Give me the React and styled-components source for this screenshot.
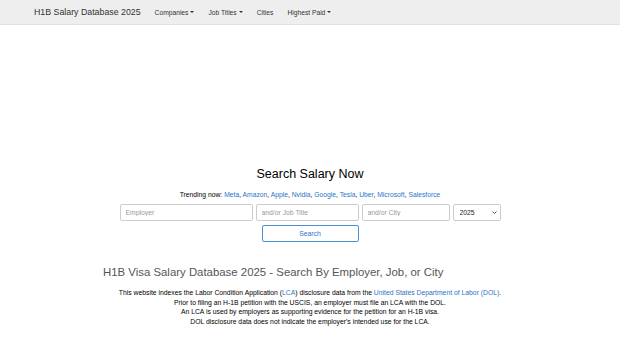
import React from "react";
import styled, { createGlobalStyle } from "styled-components";

const companies = ["Meta", "Amazon", "Apple", "Nvidia", "Google", "Tesla", "Uber", "Microsoft", "Salesforce"];

const navItems = [
  { label: "Companies", caret: true },
  { label: "Job Titles", caret: true },
  { label: "Cities", caret: false },
  { label: "Highest Paid", caret: true },
];

const App = () => {
  return (
    <>
      <GlobalStyle />
      <Navbar>
        <Brand>H1B Salary Database 2025</Brand>
        <NavList>
          {navItems.map((item) => (
            <NavItem key={item.label}>
              {item.label}
              {item.caret && <Caret />}
            </NavItem>
          ))}
        </NavList>
      </Navbar>
      <AdSpace />
      <SearchSection>
        <SearchTitle>Search Salary Now</SearchTitle>
        <Trending>
          Trending now:{" "}
          {companies.map((c, i) => (
            <React.Fragment key={c}>
              <Link href="#">{c}</Link>
              {i < companies.length - 1 ? ", " : ""}
            </React.Fragment>
          ))}
        </Trending>
        <SearchRow>
          <Input $w={133} placeholder="Employer" />
          <Input $w={103} placeholder="and/or Job Title" />
          <Input $w={88} placeholder="and/or City" />
          <SelectWrap>
            <YearSelect defaultValue="2025">
              <option>2025</option>
              <option>2024</option>
              <option>2023</option>
            </YearSelect>
            <Chevron viewBox="0 0 10 6">
              <path d="M1 1l4 4 4-4" fill="none" stroke="#222" strokeWidth="1.6" />
            </Chevron>
          </SelectWrap>
        </SearchRow>
        <SearchButton>Search</SearchButton>
      </SearchSection>
      <InfoSection>
        <InfoHeading>H1B Visa Salary Database 2025 - Search By Employer, Job, or City</InfoHeading>
        <InfoText>
          This website indexes the Labor Condition Application (<Link href="#">LCA</Link>) disclosure data from the{" "}
          <Link href="#">United States Department of Labor (DOL)</Link>.
          <br />
          Prior to filing an H-1B petition with the USCIS, an employer must file an LCA with the DOL.
          <br />
          An LCA is used by employers as supporting evidence for the petition for an H-1B visa.
          <br />
          DOL disclosure data does not indicate the employer's intended use for the LCA.
        </InfoText>
      </InfoSection>
    </>
  );
};

const GlobalStyle = createGlobalStyle`
  body {
    margin: 0;
    background: #ffffff;
    font-family: "Liberation Sans", Arial, sans-serif;
    color: #333333;
  }
`;

const Navbar = styled.nav`
  display: flex;
  align-items: center;
  height: 24px;
  padding-left: 34px;
  background: #eeeeee;
  border-bottom: 1px solid #e4dfee;
`;

const Brand = styled.a`
  font-size: 8.8px;
  color: #333333;
  margin-right: 14px;
`;

const NavList = styled.div`
  display: flex;
  gap: 14px;
`;

const NavItem = styled.a`
  display: flex;
  align-items: center;
  font-size: 6.7px;
  color: #333333;
`;

const Caret = styled.span`
  display: inline-block;
  margin-left: 2px;
  border-top: 2px solid #333333;
  border-left: 2px solid transparent;
  border-right: 2px solid transparent;
`;

const AdSpace = styled.div`
  height: 142px;
`;

const SearchSection = styled.section`
  display: flex;
  flex-direction: column;
  align-items: center;
`;

const SearchTitle = styled.h2`
  margin: 0;
  font-size: 12.5px;
  font-weight: 400;
  color: #000000;
  line-height: 15px;
`;

const Trending = styled.div`
  margin-top: 8px;
  font-size: 6.75px;
  line-height: 9px;
  color: #000000;
`;

const Link = styled.a`
  color: #2a73c9;
  text-decoration: none;
`;

const SearchRow = styled.div`
  display: flex;
  align-items: flex-start;
  gap: 3px;
  margin-top: 5px;
`;

const Input = styled.input`
  box-sizing: border-box;
  width: ${(p) => p.$w}px;
  height: 17px;
  padding: 0 5px;
  border: 1px solid #cccccc;
  border-radius: 2px;
  font-family: "Liberation Sans", Arial, sans-serif;
  font-size: 6.8px;
  color: #555555;
  &::placeholder {
    color: #999999;
  }
`;

const SelectWrap = styled.div`
  position: relative;
  width: 48px;
  height: 17px;
`;

const YearSelect = styled.select`
  display: block;
  box-sizing: border-box;
  appearance: none;
  margin: 0;
  width: 100%;
  height: 17px;
  padding: 0 6px;
  border: 1px solid #cccccc;
  border-radius: 2px;
  background: #ffffff;
  font-family: "Liberation Sans", Arial, sans-serif;
  font-size: 6.8px;
  color: #222222;
`;

const Chevron = styled.svg`
  position: absolute;
  right: 4px;
  top: 7px;
  width: 5px;
  height: 3px;
  pointer-events: none;
`;

const SearchButton = styled.button`
  box-sizing: border-box;
  margin-top: 4px;
  width: 97px;
  height: 17px;
  background: #ffffff;
  border: 1px solid #4a90d9;
  border-radius: 2px;
  font-family: "Liberation Sans", Arial, sans-serif;
  font-size: 6.8px;
  color: #2a73c9;
`;

const InfoSection = styled.section`
  display: flex;
  flex-direction: column;
  align-items: center;
  margin-top: 23px;
`;

const InfoHeading = styled.h3`
  margin: 0;
  align-self: flex-start;
  padding-left: 103px;
  font-size: 11.4px;
  line-height: 14px;
  font-weight: 400;
  color: #555555;
`;

const InfoText = styled.p`
  margin: 9px 0 0;
  text-align: center;
  font-size: 6.8px;
  line-height: 9.7px;
  color: #000000;
`;

export default App;
